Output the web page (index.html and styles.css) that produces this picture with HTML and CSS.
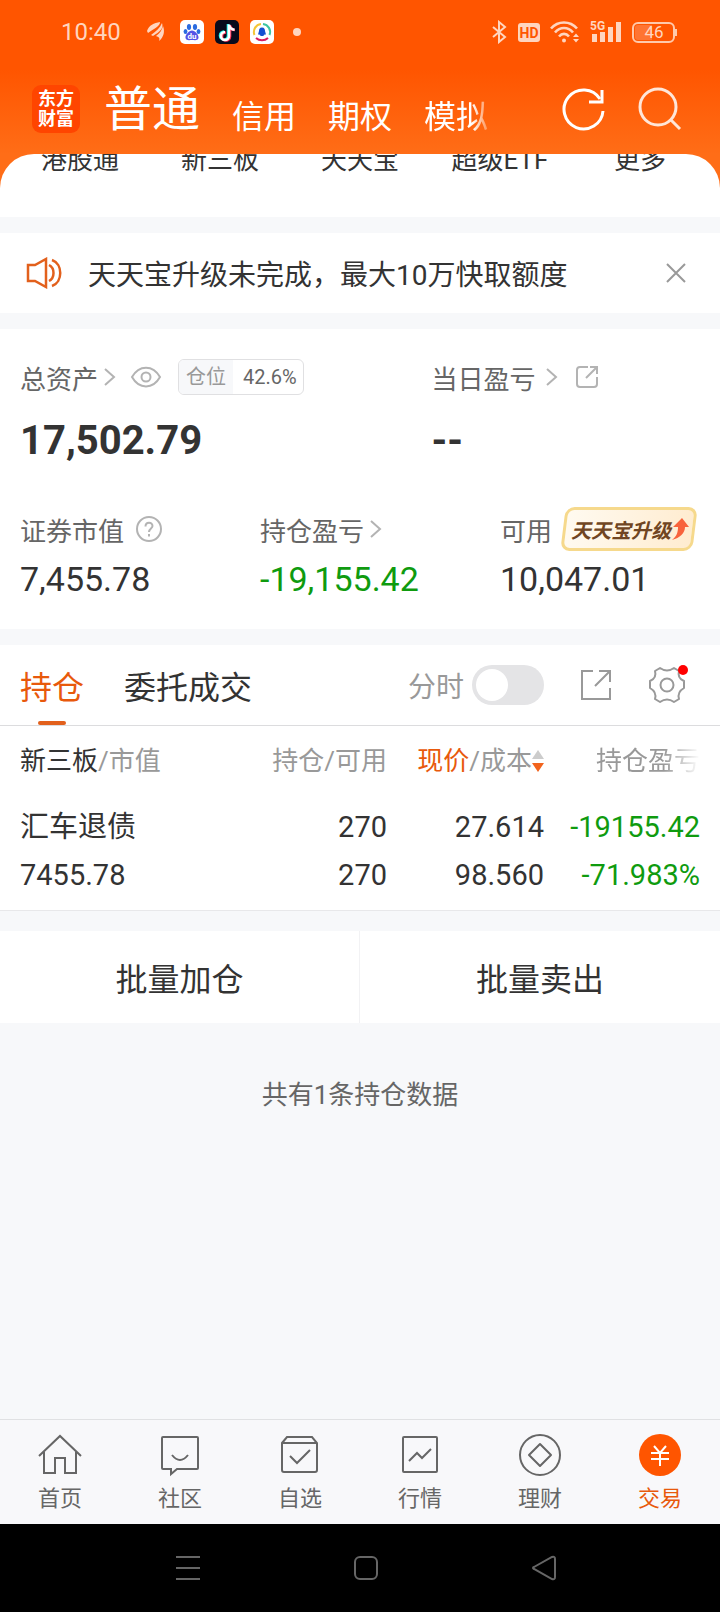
FILE: index.html
```html
<!DOCTYPE html>
<html lang="zh-CN">
<head>
    <meta charset="UTF-8">
    <meta name="viewport" content="width=device-width, initial-scale=1.0">
    <title>交易</title>
    <link rel="stylesheet" href="styles.css">
</head>
<body>
    <header class="top">
        <div class="status">
            <span class="clock">10:40</span>
            <svg class="leaf" width="18" height="20" viewBox="0 0 18 20" fill="#ffd5bf">
                <path d="M0 9C2 3 7 1 13 0C13 4 8 6 1 11Z"/>
                <path d="M4 13C9 9 13 6 15 1C17 7 12 10 6 14Z"/>
                <path d="M9 14C13 11 15 8 16 4C18 9 17 15 12 19C13 16 12 15 9 14Z"/>
            </svg>
            <svg class="app" width="24" height="24" viewBox="0 0 24 24">
                <rect width="24" height="24" rx="5" fill="#fff"/>
                <g fill="#2a6be0">
                    <ellipse cx="9" cy="7" rx="2.1" ry="3"/>
                    <ellipse cx="15" cy="7" rx="2.1" ry="3"/>
                    <ellipse cx="5.5" cy="11.5" rx="1.9" ry="2.5"/>
                    <ellipse cx="18.5" cy="11.5" rx="1.9" ry="2.5"/>
                </g>
                <path d="M12 10.5C15 10.5 19 15 18.5 18C18 21 14 20 12 20S6 21 5.5 18C5 15 9 10.5 12 10.5Z" fill="#5552e6"/>
                <text x="12" y="18.5" text-anchor="middle" class="du">du</text>
            </svg>
            <svg class="app" width="24" height="24" viewBox="0 0 24 24" fill="none" stroke-width="2.6">
                <rect width="24" height="24" rx="5" fill="#080b1c"/>
                <path d="M13 4V15.5A4 4 0 1 1 9 11.5M13 5C14 8 16 9 19 9.5" stroke="#25f4ee"/>
                <path d="M15 5V16.5A4 4 0 1 1 11 12.5M15 6C16 9 18 10 20 10" stroke="#fe2c55"/>
                <path d="M14 4.5V16A4 4 0 1 1 10 12M14 5C15 8.5 17 9.5 19.5 9.8" stroke="#fff"/>
            </svg>
            <svg class="app" width="24" height="24" viewBox="0 0 24 24" fill="none" stroke-width="2">
                <rect width="24" height="24" rx="5" fill="#fff"/>
                <path d="M4.5 15A8 8 0 0 1 11 4" stroke="#f4c535"/>
                <path d="M13 4A8 8 0 0 1 19.5 15" stroke="#3cc4a2"/>
                <path d="M6 18A9 9 0 0 0 18 18" stroke="#d81b60"/>
                <path d="M12 7.5C14.5 7.5 15 9.5 15 11L16 14.5H14.5C13.5 16.5 10.5 16.5 9.5 14.5H8L9 11C9 9.5 9.5 7.5 12 7.5Z" fill="#1450d2"/>
            </svg>
            <span class="dot"></span>
            <span class="status-right">
                <svg width="16" height="24" viewBox="0 0 16 24" fill="none" stroke="#ffd5bf" stroke-width="2">
                    <path d="M1 7L13 17L7 22V2L13 7L1 17"/>
                </svg>
                <svg width="22" height="24" viewBox="0 0 22 24">
                    <rect y="3" width="22" height="19" rx="3" fill="#ffd5bf"/>
                    <text x="11" y="18" text-anchor="middle" class="hd">HD</text>
                </svg>
                <svg width="30" height="24" viewBox="0 0 30 24" fill="none" stroke="#ffd5bf" stroke-width="2.6">
                    <path d="M1 8.5C8 0.5 20 0.5 27 8.5"/>
                    <path d="M5 12.5C10 6.5 18 6.5 23 12.5"/>
                    <path d="M9 16.5C12 13 16 13 19 16.5"/>
                    <circle cx="14" cy="20.5" r="2" fill="#ffd5bf" stroke="none"/>
                    <path d="M23 17L26 13.5L29 17ZM23 19L26 22.5L29 19Z" fill="#ffd5bf" stroke="none"/>
                </svg>
                <svg width="32" height="24" viewBox="0 0 32 24" fill="#ffd5bf">
                    <text x="0" y="10" class="net">5G</text>
                    <path d="M2 14H7V22H2ZM10 12H15V22H10ZM18 7H23V22H18ZM26 2H31V22H26Z"/>
                </svg>
                <svg width="46" height="24" viewBox="0 0 46 24">
                    <rect x="1" y="3" width="41" height="19" rx="5" fill="none" stroke="#ffc9ab" stroke-width="2"/>
                    <path d="M6 5H20V20H6Q3 20 3 17V8Q3 5 6 5Z" fill="#ff7432"/>
                    <path d="M44 9V16" stroke="#ffc9ab" stroke-width="2"/>
                    <text x="22" y="18" text-anchor="middle" class="battery">46</text>
                </svg>
            </span>
        </div>
        <div class="header">
            <div class="logo">东方<br>财富</div>
            <nav class="modes">
                <a href="#" class="current">普通</a>
                <a href="#">信用</a>
                <a href="#">期权</a>
                <a href="#" class="fade">模拟</a>
            </nav>
            <div class="header-actions">
                <button aria-label="刷新">
                    <svg width="44" height="44" viewBox="0 0 44 44" fill="none" stroke="#fff" stroke-width="3">
                        <path d="M41 24A19.5 19.5 0 1 1 38 12"/>
                        <path d="M40 3V15H27"/>
                    </svg>
                </button>
                <button aria-label="搜索">
                    <svg width="44" height="44" viewBox="0 0 44 44" fill="none" stroke="#ffe6d8" stroke-width="3">
                        <circle cx="20" cy="20" r="18"/>
                        <path d="M32.5 32.5L42 42"/>
                    </svg>
                </button>
            </div>
        </div>
    </header>

    <main>
        <div class="quick-wrap">
            <nav class="quick">
                <a href="#">港股通</a>
                <a href="#">新三板</a>
                <a href="#">天天宝</a>
                <a href="#">超级ETF</a>
                <a href="#">更多</a>
            </nav>
        </div>

        <section class="notice">
            <svg width="36" height="32" viewBox="0 0 36 32" fill="none" stroke="#e2601c" stroke-width="2.5">
                <path d="M2 8H9L20 2V30L9 24H2Z"/>
                <path d="M23 8C29 11 29 21 23 24M26 3C37 7 37 25 26 29"/>
            </svg>
            <p>天天宝升级未完成，最大10万快取额度</p>
            <button aria-label="关闭">
                <svg width="20" height="20" viewBox="0 0 20 20" fill="none" stroke="#999" stroke-width="2">
                    <path d="M1 1L19 19M19 1L1 19"/>
                </svg>
            </button>
        </section>

        <section class="assets">
            <div class="assets-main">
                <div>
                    <div class="label">
                        总资产
                        <svg class="arrow" width="12" height="18" viewBox="0 0 12 18"><path d="M1 1L10 9L1 17"/></svg>
                        <svg class="eye" width="32" height="22" viewBox="0 0 32 22">
                            <path d="M2 11C9 -1.5 23 -1.5 30 11C23 23.5 9 23.5 2 11Z"/>
                            <circle cx="16" cy="11" r="4.5"/>
                        </svg>
                        <span class="tag"><span class="tag-name">仓位</span><span class="tag-value">42.6%</span></span>
                    </div>
                    <div class="total">17,502.79</div>
                </div>
                <div>
                    <div class="label">
                        当日盈亏
                        <svg class="arrow day" width="12" height="18" viewBox="0 0 12 18"><path d="M1 1L10 9L1 17"/></svg>
                        <svg class="share" width="24" height="24" viewBox="0 0 24 24">
                            <path d="M13 2H5Q2 2 2 5V19Q2 22 5 22H19Q22 22 22 19V12M11 13L22 2M15 2H22V9"/>
                        </svg>
                    </div>
                    <div class="total">--</div>
                </div>
            </div>
            <div class="assets-sub">
                <div>
                    <div class="label">
                        证券市值
                        <svg class="help" width="26" height="26" viewBox="0 0 26 26">
                            <circle cx="13" cy="13" r="12"/>
                            <path d="M9.5 10.5C9.5 5.5 16.5 5.5 16.5 10C16.5 12.5 13 12.5 13 16M13 18V20.5"/>
                        </svg>
                    </div>
                    <div class="value">7,455.78</div>
                </div>
                <div>
                    <div class="label">
                        持仓盈亏
                        <svg class="arrow" width="12" height="18" viewBox="0 0 12 18"><path d="M1 1L10 9L1 17"/></svg>
                    </div>
                    <div class="value green">-19,155.42</div>
                </div>
                <div>
                    <div class="label">
                        可用
                        <a href="#" class="upgrade">天天宝升级<svg width="18" height="24" viewBox="0 0 18 24">
                            <path d="M11 1L18 10L14 10C14 16 9 21 1 23C6 19 7 15 7 10L2 10Z" fill="#f8633c"/>
                        </svg></a>
                    </div>
                    <div class="value">10,047.01</div>
                </div>
            </div>
        </section>

        <section class="positions">
            <div class="tabs">
                <button class="tab active">持仓</button>
                <button class="tab">委托成交</button>
                <div class="tools">
                    <label for="minute">分时</label>
                    <input type="checkbox" id="minute" class="switch">
                    <button aria-label="分享">
                        <svg width="32" height="32" viewBox="0 0 32 32" fill="none" stroke="#999" stroke-width="2">
                            <path d="M13 2H2V30H30V19M15 17L30 2M19 2H30V13"/>
                        </svg>
                    </button>
                    <button class="settings" aria-label="设置">
                        <svg width="38" height="38" viewBox="0 0 38 38" fill="none" stroke="#999" stroke-width="2" stroke-linejoin="round">
                            <path d="M12 2Q19 7 26 2L31 5Q29 12 36 15V22Q29 26 31 33L26 36Q19 31 12 36L7 33Q9 26 2 22V15Q9 12 7 5Z"/>
                            <circle cx="19" cy="19" r="6.5"/>
                        </svg>
                    </button>
                </div>
            </div>
            <table>
                <thead>
                    <tr>
                        <th><b>新三板</b>/市值</th>
                        <th>持仓/可用</th>
                        <th><b class="orange">现价</b>/成本<svg class="sort" width="12" height="24" viewBox="0 0 12 24">
                            <path d="M0 10L6 1L12 10Z" fill="#ccc"/>
                            <path d="M0 14L6 23L12 14Z" fill="#f2641e"/>
                        </svg></th>
                        <th><span class="fade">持仓盈亏</span></th>
                    </tr>
                </thead>
                <tbody>
                    <tr>
                        <td>汇车退债<br>7455.78</td>
                        <td>270<br>270</td>
                        <td>27.614<br>98.560</td>
                        <td class="green">-19155.42<br>-71.983%</td>
                    </tr>
                </tbody>
            </table>
        </section>

        <div class="batch">
            <button>批量加仓</button>
            <button>批量卖出</button>
        </div>
        <p class="count">共有1条持仓数据</p>
    </main>

    <nav class="bottom">
        <a href="#">
            <svg width="44" height="44" viewBox="0 0 44 44">
                <path d="M1 23L22 3L43 23M6 19V40H17V25H27V40H38V19"/>
            </svg>
            首页
        </a>
        <a href="#">
            <svg width="44" height="44" viewBox="0 0 44 44">
                <path d="M5 4H39Q40 4 40 5V35Q40 36 39 36H19L13 41V36H5Q4 36 4 35V5Q4 4 5 4ZM14 22Q22 32 30 22"/>
            </svg>
            社区
        </a>
        <a href="#">
            <svg width="44" height="44" viewBox="0 0 44 44">
                <path d="M4 10L9 4H34L39 10V37Q39 39 37 39H6Q4 39 4 37ZM4 10H39M12 23L19 30L32 17"/>
            </svg>
            自选
        </a>
        <a href="#">
            <svg width="44" height="44" viewBox="0 0 44 44">
                <rect x="5" y="4" width="34" height="35" rx="1"/>
                <path d="M11 28L19 20L24 25L33 16"/>
            </svg>
            行情
        </a>
        <a href="#">
            <svg width="44" height="44" viewBox="0 0 44 44">
                <circle cx="22" cy="22" r="20"/>
                <path d="M22 11L33 22L22 33L11 22Z" stroke-linejoin="round"/>
            </svg>
            理财
        </a>
        <a href="#" class="active">
            <svg width="44" height="44" viewBox="0 0 44 44">
                <circle cx="22" cy="22" r="21" class="disc"/>
                <path d="M16 13L22 20L28 13M13 20H31M13 26H31M22 20V33" class="yuan"/>
            </svg>
            交易
        </a>
    </nav>
    <div class="system">
        <button aria-label="菜单">
            <svg width="26" height="26" viewBox="0 0 26 26"><path d="M1 2H25M1 13H25M1 24H25"/></svg>
        </button>
        <button aria-label="主屏幕">
            <svg width="26" height="26" viewBox="0 0 26 26"><rect x="2" y="2" width="22" height="22" rx="5"/></svg>
        </button>
        <button aria-label="返回">
            <svg width="26" height="26" viewBox="0 0 26 26"><path d="M3 12L21 2Q24 1 24 4V22Q24 25 21 24L3 14Q1 13 3 12Z"/></svg>
        </button>
    </div>
</body>
</html>
```
FILE: styles.css
```css
* {
    box-sizing: border-box;
}

body {
    margin: 0;
    min-height: 100vh;
    display: flex;
    flex-direction: column;
    background: #f7f8fa;
    color: #333;
    font-family: Roboto, "Noto Sans CJK SC", sans-serif;
    font-size: 26px;
    font-weight: 400;
}

a {
    color: inherit;
    text-decoration: none;
}

button {
    padding: 0;
    border: 0;
    background: none;
    color: inherit;
    font: inherit;
    cursor: pointer;
}

p {
    margin: 0;
}

svg {
    display: block;
    flex-shrink: 0;
}

main {
    flex: 1;
}

.green {
    color: #0f9b0f;
}

/* top */
.top {
    background: linear-gradient(#ff5500 45%, #ff6d17);
    color: #fff;
}

.status {
    display: flex;
    align-items: center;
    height: 64px;
    padding: 0 42px 0 61px;
}

.clock {
    font-size: 24px;
    color: #ffd5bf;
}

.leaf {
    margin-left: 26px;
    margin-right: 4px;
}

.app {
    margin-left: 11px;
}

.dot {
    width: 8px;
    height: 8px;
    margin-left: 19px;
    border-radius: 50%;
    background: #ffd5bf;
}

.status-right {
    display: flex;
    gap: 10px;
    margin-left: auto;
}

.du {
    font-size: 8px;
    font-weight: 700;
    fill: #fff;
}

.hd {
    font-size: 14px;
    font-weight: 700;
    fill: #ff5500;
}

.net {
    font-size: 12px;
    font-weight: 700;
}

.battery {
    font-size: 17px;
    fill: #ffd5bf;
}

.header {
    display: flex;
    align-items: center;
    height: 90px;
    padding: 0 38px 0 32px;
}

.logo {
    width: 48px;
    height: 48px;
    padding-top: 4px;
    border-radius: 9px;
    background: #ff4500;
    font-size: 18px;
    font-weight: 700;
    line-height: 20px;
    text-align: center;
}

.modes {
    display: flex;
    align-items: flex-end;
    gap: 32px;
    margin-left: 24px;
    padding-top: 2px;
    font-size: 32px;
    line-height: 50px;
}

.modes .current {
    font-size: 48px;
    line-height: 64px;
}

.fade {
    -webkit-mask-image: linear-gradient(to right, #000 65%, transparent);
    mask-image: linear-gradient(to right, #000 65%, transparent);
}

.modes .fade {
    -webkit-mask-image: linear-gradient(to right, #000 75%, transparent 110%);
    mask-image: linear-gradient(to right, #000 75%, transparent 110%);
}

.header-actions {
    display: flex;
    gap: 32px;
    margin-left: auto;
}

/* shortcuts, scrolled partly under the header */
.quick-wrap {
    background: #ff6d17;
}

.quick {
    display: grid;
    grid-template-columns: repeat(5, 1fr);
    height: 63px;
    padding: 0 10px;
    border-radius: 34px 34px 0 0;
    overflow: hidden;
    background: #fff;
    text-align: center;
    line-height: 36px;
}

.quick a {
    margin-top: -12px;
}

/* notice */
.notice {
    display: flex;
    align-items: center;
    height: 80px;
    margin: 16px 0;
    padding: 0 34px 0 26px;
    background: #fff;
    font-size: 28px;
}

.notice p {
    flex: 1;
    margin-left: 26px;
}

/* assets */
.assets {
    padding: 30px 0;
    background: #fff;
}

.assets-main {
    display: grid;
    grid-template-columns: 4fr 3fr;
}

.assets-sub {
    display: grid;
    grid-template-columns: repeat(3, 1fr);
    margin-top: 42px;
}

.assets-main > div,
.assets-sub > div {
    padding-left: 20px;
}

.label {
    display: flex;
    align-items: center;
    height: 36px;
    color: #666;
    white-space: nowrap;
}

.assets-sub .label {
    height: 44px;
}

.label > svg {
    fill: none;
    stroke: #b3b3b3;
    stroke-width: 2;
}

.arrow {
    margin-left: 6px;
}

.arrow.day {
    margin-left: 11px;
}

.eye {
    margin-left: 14px;
}

.share {
    margin-left: 17px;
}

.help {
    margin-left: 12px;
}

.tag {
    display: flex;
    margin-left: 16px;
    border: 1px solid #e0e0e2;
    border-radius: 6px;
    overflow: hidden;
    font-size: 20px;
    line-height: 34px;
}

.tag-name {
    padding: 0 7px;
    background: #f7f8fa;
    color: #999;
}

.tag-value {
    padding: 0 6px 0 10px;
}

.total {
    margin-top: 22px;
    font-size: 40px;
    font-weight: 700;
    line-height: 48px;
}

.value {
    margin-top: 8px;
    font-size: 34px;
    line-height: 40px;
}

.upgrade {
    position: relative;
    z-index: 0;
    display: flex;
    align-items: center;
    height: 44px;
    margin-left: 9px;
    padding: 0 8px 0 10px;
    color: #704522;
    font-size: 20px;
    font-weight: 700;
    font-style: italic;
}

/* slanted plate behind the text */
.upgrade::before {
    content: "";
    position: absolute;
    inset: 0 2px;
    z-index: -1;
    border: 3px solid #f6d98c;
    border-radius: 9px;
    background: linear-gradient(to right, #fffaf0, #ffecd0);
    transform: skewX(-7deg);
}

/* positions */
.positions {
    margin-top: 16px;
    background: #fff;
    border-bottom: 1px solid #e8e8ea;
}

.tabs {
    display: flex;
    align-items: center;
    gap: 40px;
    padding: 0 34px 0 20px;
    border-bottom: 1px solid #dcdcde;
    font-size: 32px;
}

.tab {
    position: relative;
    height: 80px;
}

.tab.active {
    color: #e8590c;
}

.tab.active::after {
    content: "";
    position: absolute;
    left: 50%;
    bottom: 0;
    width: 28px;
    height: 4px;
    margin-left: -14px;
    border-radius: 2px;
    background: #e2601c;
}

.tools {
    display: flex;
    align-items: center;
    margin-left: auto;
    color: #999;
    font-size: 28px;
}

.switch {
    appearance: none;
    width: 72px;
    height: 40px;
    margin: 0 36px 0 8px;
    padding: 4px;
    border-radius: 20px;
    background: #e4e4e6;
}

.switch::before {
    content: "";
    display: block;
    width: 32px;
    height: 32px;
    border-radius: 50%;
    background: #fff;
}

.switch:checked::before {
    margin-left: auto;
}

.settings {
    position: relative;
    margin-left: 36px;
}

.settings::after {
    content: "";
    position: absolute;
    top: -1px;
    right: -2px;
    width: 10px;
    height: 10px;
    border-radius: 50%;
    background: #f00;
}

table {
    width: 100%;
    border-collapse: collapse;
    table-layout: fixed;
}

th {
    height: 64px;
    padding: 0;
    color: #999;
    font-weight: 400;
    text-align: right;
    white-space: nowrap;
}

th b {
    color: #333;
    font-weight: 400;
}

th .orange {
    color: #e8590c;
}

td {
    padding: 13px 0 11px;
    font-size: 29px;
    line-height: 48px;
    text-align: right;
}

th:first-child,
td:first-child {
    width: 230px;
    padding-left: 20px;
    text-align: left;
}

th:last-child,
td:last-child {
    width: 176px;
    padding-right: 20px;
}

.sort {
    display: inline-block;
    vertical-align: -3px;
}

th .fade {
    display: inline-block;
}

.batch {
    display: grid;
    grid-template-columns: 1fr 1fr;
    margin-top: 20px;
    background: #fff;
    font-size: 32px;
}

.batch button {
    height: 92px;
}

.batch button:first-child {
    border-right: 1px solid #f2f2f4;
}

.count {
    margin: 52px 0;
    color: #666;
    line-height: 40px;
    text-align: center;
}

/* bottom bars */
.bottom {
    display: grid;
    grid-template-columns: repeat(6, 1fr);
    height: 105px;
    padding-top: 13px;
    border-top: 1px solid #e0e1e3;
    background: #f8f8fa;
    color: #666;
    font-size: 22px;
    line-height: 44px;
}

.bottom a {
    display: flex;
    flex-direction: column;
    align-items: center;
}

.bottom svg {
    fill: none;
    stroke: #666;
    stroke-width: 2;
}

.bottom .active {
    color: #e8590c;
}

.bottom .disc {
    fill: #ff5500;
    stroke: none;
}

.bottom .yuan {
    stroke: #fff;
}

.system {
    display: flex;
    justify-content: center;
    align-items: center;
    gap: 152px;
    height: 88px;
    padding-left: 12px;
    background: #000;
}

.system svg {
    fill: none;
    stroke: #666;
    stroke-width: 2;
}
```
